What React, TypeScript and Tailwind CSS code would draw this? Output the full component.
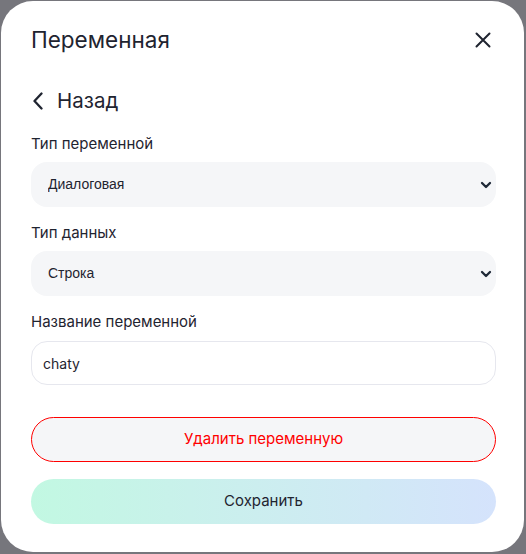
import { useState } from 'react';

function Chevron() {
  return (
    <svg
      className="pointer-events-none absolute right-[4px] top-1/2 -translate-y-1/2"
      width="12"
      height="12"
      viewBox="0 0 12 12"
      fill="none"
    >
      <path d="M2 4L6 8L10 4" stroke="#1f2937" strokeWidth="2.3" strokeLinecap="round" strokeLinejoin="round" />
    </svg>
  );
}

function SelectField({ label, value, options, top }: { label: string; value: string; options: string[]; top: string }) {
  const [v, setV] = useState(value);
  return (
    <div className={top}>
      <div className="text-[15px] leading-[20px] text-[#1f2430]">{label}</div>
      <div className="relative mt-[8px]">
        <select
          value={v}
          onChange={(e) => setV(e.target.value)}
          className="h-[45px] w-full appearance-none rounded-[16px] bg-[#f5f6f8] pl-[17px] text-[14px] text-[#1f2430] outline-none [font-family:'Liberation_Sans',Arial,sans-serif]"
        >
          {options.map((o) => (
            <option key={o}>{o}</option>
          ))}
        </select>
        <Chevron />
      </div>
    </div>
  );
}

export default function App() {
  return (
    <div className="h-[554px] w-[526px] bg-[#76767c] pl-px pt-px">
      <div className="h-[551px] w-[523px] rounded-[32px] bg-white pl-[30px] pr-[28px] pt-[25px] font-['Inter',sans-serif] text-[#1f2430]">
        {/* Header */}
        <div className="flex h-[28px] items-center justify-between">
          <h2 className="text-[22.5px] leading-[28px]">Переменная</h2>
          <button className="mr-[5px] text-[#1f2430]">
            <svg width="16" height="16" viewBox="0 0 16 16" fill="none">
              <path d="M1.5 1.5L14.5 14.5M14.5 1.5L1.5 14.5" stroke="currentColor" strokeWidth="2" strokeLinecap="round" />
            </svg>
          </button>
        </div>

        {/* Back */}
        <button className="mt-[33px] flex h-[28px] items-center">
          <svg className="ml-[2px]" width="10" height="18" viewBox="0 0 10 18" fill="none">
            <path d="M8.5 1.5L1.5 9L8.5 16.5" stroke="#1f2430" strokeWidth="2.3" strokeLinecap="round" strokeLinejoin="round" />
          </svg>
          <span className="ml-[14px] text-[20.5px] leading-[28px]">Назад</span>
        </button>

        <SelectField top="mt-[19px]" label="Тип переменной" value="Диалоговая" options={['Диалоговая', 'Глобальная']} />
        <SelectField top="mt-[16px]" label="Тип данных" value="Строка" options={['Строка', 'Число', 'Логический']} />

        {/* Name */}
        <div className="mt-[16px]">
          <div className="text-[15px] leading-[20px]">Название переменной</div>
          <input
            defaultValue="chaty"
            className="mt-[9px] h-[44px] w-full rounded-[16px] border border-[#e6e7ee] bg-white px-[11px] text-[14px] text-[#1f2430] outline-none"
          />
        </div>

        {/* Actions */}
        <button className="mt-[32px] flex h-[45px] w-full items-center justify-center rounded-full border border-[#ff0000] bg-[#f5f6f8] text-[15px] text-[#f00]">
          Удалить переменную
        </button>
        <button className="mt-[17px] flex h-[45px] w-full items-center justify-center rounded-full bg-gradient-to-r from-[#c2f8e2] to-[#d5e3fc] text-[15px] text-[#1f2430]">
          Сохранить
        </button>
      </div>
    </div>
  );
}
